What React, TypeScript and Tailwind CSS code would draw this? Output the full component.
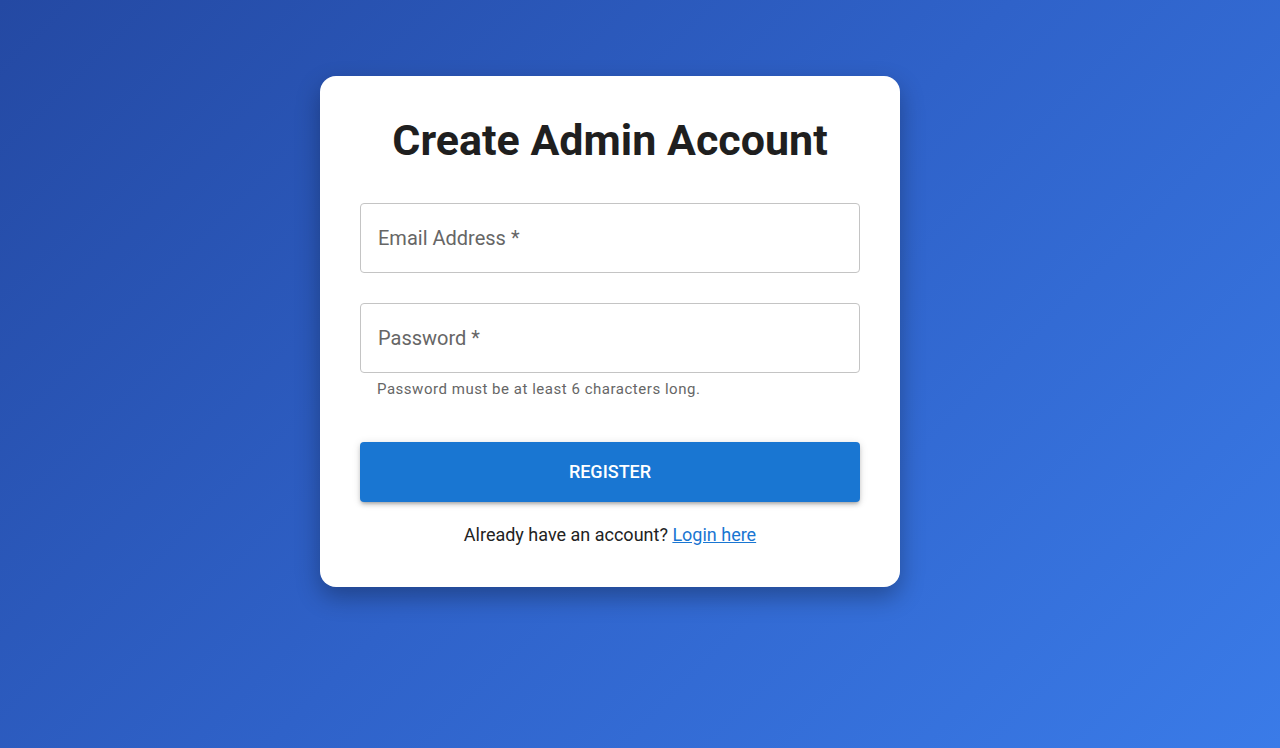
export default function App() {
  return (
    <div
      className="min-h-[748px] w-full bg-[linear-gradient(135deg,#2449a3_0%,#2f62c9_50%,#3a7be8_100%)] pl-[320px] pt-[76px]"
      style={{ fontFamily: "Roboto, 'Liberation Sans', sans-serif" }}
    >
      <div className="w-[580px] rounded-2xl bg-white px-10 pb-10 pt-10 shadow-[0_10px_24px_rgba(0,0,0,0.3)]">
        <h1 className="text-center text-[43px] font-bold leading-[48px] text-[#1f1f1f]">
          Create Admin Account
        </h1>

        <div className="mt-[39px] flex h-[70px] items-center rounded border border-[#c4c4c4] px-[17px]">
          <span className="text-[20px] leading-6 text-[#666666]">Email Address *</span>
        </div>

        <div className="mt-[30px] flex h-[70px] items-center rounded border border-[#c4c4c4] px-[17px]">
          <span className="text-[20px] leading-6 text-[#666666]">Password *</span>
        </div>
        <p className="mt-[6px] px-[17px] text-[15px] leading-5 tracking-[0.035em] text-[#666666]">
          Password must be at least 6 characters long.
        </p>

        <button
          type="button"
          className="mt-[43px] flex h-[60px] w-full items-center justify-center rounded bg-[#1976d2] pb-[2px] text-[18px] font-medium uppercase text-white shadow-[0_3px_3px_-2px_rgba(0,0,0,0.2),0_3px_4px_0_rgba(0,0,0,0.14),0_1px_8px_0_rgba(0,0,0,0.12)]"
        >
          Register
        </button>

        <p className="mt-[21px] text-center text-[18px] leading-6 text-[#222222]">
          Already have an account?{" "}
          <a href="#login" className="text-[#1976d2] underline">
            Login here
          </a>
        </p>
      </div>
    </div>
  );
}
